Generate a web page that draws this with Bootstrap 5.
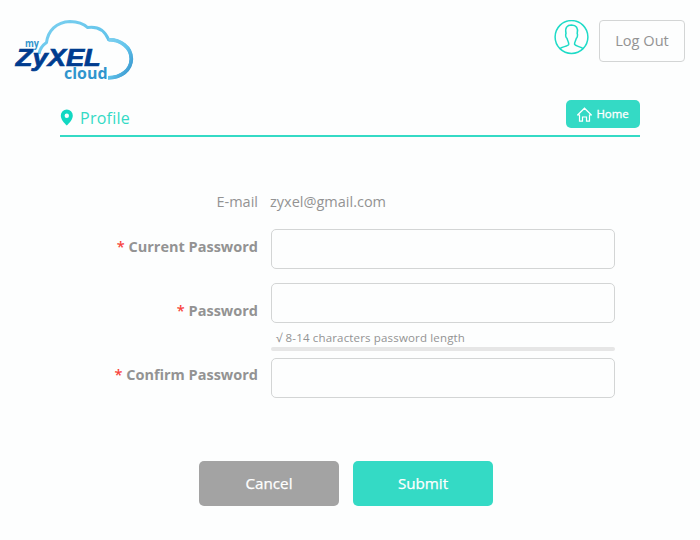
<!DOCTYPE html>
<html lang="en">
<head>
<meta charset="utf-8">
<meta name="viewport" content="width=device-width, initial-scale=1">
<title>Profile</title>
<link href="https://cdn.jsdelivr.net/npm/bootstrap@5.3.0/dist/css/bootstrap.min.css" rel="stylesheet">
<style>
body{background:#fdfefe;color:#939393;font-family:"Open Sans","Noto Sans",sans-serif;font-size:14px;height:540px;overflow:hidden}
.top-bar{height:100px;padding:20px 15px 0 15px}
.user-icon{width:35px;height:35px;margin-right:10px}
.brand-logo{width:122px;height:66px;margin-top:-4px;overflow:visible}
.btn-logout{width:86px;height:42px;border:1px solid #d3d5d5;border-radius:4px;color:#939393;font-size:14.6px;padding:0;background:#fdfefe}
.profile-title{margin:0 60px;height:37px;border-bottom:2px solid #34dac5;color:#34dac5}
.title-text{font-size:16px;letter-spacing:.25px;line-height:20px;margin:8px 0 0 7px}
.pin-icon{width:13px;height:17px;margin-top:9px}
.btn-home{width:74px;height:28px;padding:0;border-radius:5px;background:#34dac5;color:#fff;font-size:11.4px;font-weight:500;-webkit-text-stroke:.3px #fff}
.form-area{width:555px;margin-left:60px;padding-top:54px}
.row-email{height:38px}
.email-label,.email-value{font-size:14.5px;line-height:22px}
.email-value{margin-left:-1px}
.field-label{width:198px;margin-right:13px;text-align:right;line-height:20px}
.row-email .field-label{line-height:22px}
.strong-label{font-weight:700;font-size:14.5px}
.req{color:#f8433c;font-weight:600}
.row-current{margin-bottom:14px}
.row-new .field-label{margin-top:18px}
.row-confirm{margin-top:7px}
.row-confirm .field-label{margin-top:7px}
.field-box{width:344px;height:40px;border:1px solid #d3d5d5;border-radius:5px;background:#fdfefe}
.hint{font-size:11.5px;letter-spacing:.16px;line-height:16px;margin:7px 0 0 5px;height:17px}
.meter{height:4px;border-radius:2px;background:#e6e6e6;width:344px}
.actions{margin:63px 0 0 199px;gap:14px}
.btn-action{width:140px;height:45px;padding:0;border-radius:5px;font-size:15.2px;color:#fff;font-weight:500;-webkit-text-stroke:.25px #fff}
.btn-cancel{background:#a3a3a3}
.btn-submit{background:#34dac5}
</style>
</head>
<body>
<header class="top-bar d-flex align-items-start">
  <svg class="brand-logo me-auto" viewBox="15 16 122 66" role="img" aria-label="myZyXEL cloud">
    <defs><linearGradient id="sky" x1="0" y1="0" x2="1" y2="1"><stop offset="0" stop-color="#7cd0f0"/><stop offset=".5" stop-color="#62c4eb"/><stop offset="1" stop-color="#318fca"/></linearGradient></defs>
    <path d="M39 54 Q40 47 46.5 42.5 C48 31 56 22 70 21.4 C79 21.5 84 24 87.5 27.5 C98 26 105 31 108.5 39.5 C120 39.5 131.3 47 131.3 59 C131 70 121.5 77.8 108 77.8" fill="none" stroke="url(#sky)" stroke-width="3"/>
    <path d="M108.5 40 C120 39.5 131.3 47 131.3 59 C131 70 121.5 77.8 108 77.8" fill="none" stroke="url(#sky)" stroke-width="3.8"/>
    <text x="25" y="47.3" font-family="Open Sans" font-weight="700" font-size="10.5" textLength="14" lengthAdjust="spacingAndGlyphs" fill="#3095cd">my</text>
    <text x="15.8" y="66.4" font-family="Liberation Sans" font-weight="700" font-style="italic" font-size="24" textLength="85" lengthAdjust="spacingAndGlyphs" fill="#003c8f" stroke="#003c8f" stroke-width=".7">ZyXEL</text>
    <text x="64" y="79.3" font-family="Open Sans" font-weight="700" font-size="15.5" textLength="43.5" lengthAdjust="spacingAndGlyphs" fill="#3095cd">cloud</text>
  </svg>
  <svg class="user-icon" viewBox="0 0 35 35" fill="none" stroke="#1edbc7" stroke-width="1.5" aria-hidden="true">
    <circle cx="17.5" cy="17" r="16.4"/>
    <path d="M6 28.6 C8 26.8 14 26.2 14.7 24.4 C15 22.3 13.5 20.8 13 18.3 C11.6 17.6 11.4 14.5 12 13.5 C10.8 7.5 13 5.2 17.5 5.1 C22.4 5.2 24.4 8 23.2 13.5 C23.9 14.6 23.4 17.6 22.3 18.3 C21.8 20.8 20.2 22.3 20.6 24.4 C21.4 26.2 27 26.8 29 28.6"/>
  </svg>
  <button class="btn btn-logout">Log Out</button>
</header>
<main>
  <div class="profile-title d-flex align-items-start">
    <svg class="pin-icon" viewBox="0 0 13 17" aria-hidden="true"><path fill="#12d8c2" fill-rule="evenodd" d="M6.8.5A6 6 0 0 0 .8 6.5C.8 10.5 4 13.8 6.8 16.5 9.6 13.8 12.8 10.5 12.8 6.5A6 6 0 0 0 6.8.5M6.8 4.5a2.2 2.2 0 1 1 0 4.4 2.2 2.2 0 0 1 0-4.4"/></svg>
    <h1 class="title-text fw-normal me-auto mb-0">Profile</h1>
    <button class="btn btn-home d-flex align-items-center justify-content-center gap-1">
      <svg width="15" height="15" viewBox="0 0 15 15" fill="none" stroke="#fff" stroke-width="1.2" aria-hidden="true"><path d="M.6 8 7.5 1.2 14.4 8H12.5V14.2H9.5V10H5.5V14.2H2.5V8Z"/></svg>Home
    </button>
  </div>
  <form class="form-area">
    <div class="d-flex row-email">
      <span class="field-label email-label">E-mail</span><span class="email-value">zyxel@gmail.com</span>
    </div>
    <div class="d-flex row-current">
      <label class="field-label strong-label mt-2" for="current"><span class="req">*</span> Current Password</label>
      <input class="field-box" id="current" type="password">
    </div>
    <div class="d-flex row-new">
      <label class="field-label strong-label" for="newpass"><span class="req">*</span> Password</label>
      <div>
        <input class="field-box d-block" id="newpass" type="password">
        <div class="hint">√ 8-14 characters password length</div>
        <div class="meter"></div>
      </div>
    </div>
    <div class="d-flex row-confirm">
      <label class="field-label strong-label" for="confirm"><span class="req">*</span> Confirm Password</label>
      <input class="field-box" id="confirm" type="password">
    </div>
  </form>
  <div class="actions d-flex">
    <button class="btn btn-action btn-cancel">Cancel</button>
    <button class="btn btn-action btn-submit">Submit</button>
  </div>
</main>
<script src="https://cdn.jsdelivr.net/npm/bootstrap@5.3.0/dist/js/bootstrap.bundle.min.js"></script>
</body>
</html>
